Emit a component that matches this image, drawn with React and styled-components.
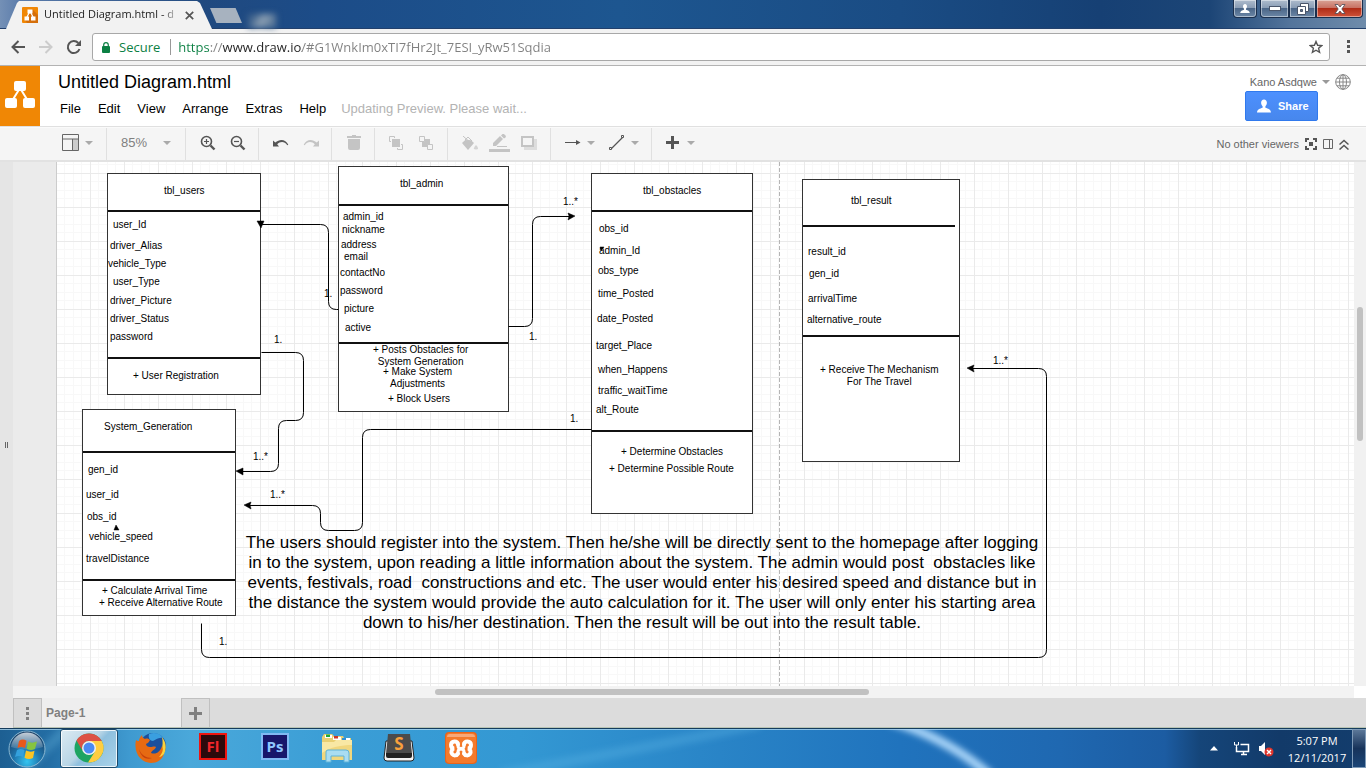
import React from 'react';
import styled, { createGlobalStyle } from 'styled-components';

const GlobalStyle = createGlobalStyle`
  *, *::before, *::after { box-sizing: border-box; }
  body { margin: 0; font-family: "Liberation Sans", Arial, sans-serif; }
  button, input { font: inherit; color: inherit; border: 0; padding: 0; margin: 0; background: none; }
  svg { display: block; flex: none; }
`;

const Screen = styled.div`
  display: flex;
  flex-direction: column;
  height: 100vh;
  min-width: 900px;
  overflow: hidden;
  background: #fff;
`;

/* ---------- browser window ---------- */

const TabStrip = styled.div`
  position: relative;
  display: flex;
  height: 29px;
  flex: none;
  padding-left: 6px;
  border-bottom: 1px solid #22406c;
  background: linear-gradient(90deg, #7490b6 0, #5b7cab 20px, #20497f 200px, #1c4c88 320px, #1d5690 620px, #1a4c84 900px, #164074 1100px, #1c4576 1210px, #53749b 1290px, #6f8cab 100%);
`;

const BrowserTab = styled.div`
  display: flex;
  align-items: center;
  width: 206px;
  height: 28px;
  margin-top: 1px;
  padding: 0 18px 0 16px;
  background: #f2f2f2;
  clip-path: polygon(0 100%, 11px 2px, 13px 0, 191px 0, 194px 2px, 100% 100%);
  font: 11px/16px "Open Sans", sans-serif;
  color: #222;
`;

const TabTitle = styled.span`
  flex: 1;
  margin: 0 0 2px 6px;
  white-space: nowrap;
  mask-image: linear-gradient(90deg, #000 118px, transparent 136px);
`;

const IconButton = styled.button`
  display: flex;
  align-items: center;
  justify-content: center;
  flex: none;
`;

const NewTab = styled.button`
  width: 32px;
  height: 15px;
  margin-top: 8px;
  margin-left: -2px;
  background: #a7b2bf;
  clip-path: polygon(0 0, 80% 0, 100% 100%, 20% 100%);
`;

const DesktopShape = styled.div`
  width: 28px;
  height: 14px;
  margin: 14px 0 0 6px;
  background: linear-gradient(120deg, #40638c 20%, #8fa2b5 50%, #5d7a9a 80%);
  filter: blur(3px);
`;

const WindowButtons = styled.div`
  display: flex;
  margin-left: auto;
  margin-right: 3px;
  height: 18px;
`;

const WindowButton = styled.button`
  display: flex;
  align-items: center;
  justify-content: center;
  width: ${(p) => p.$w}px;
  height: 18px;
  margin-left: ${(p) => (p.$apart ? 3 : 0)}px;
  border: 1px solid #1b2f4d;
  border-top: 0;
  border-radius: ${(p) => p.$radius || '0'};
  box-shadow: inset 0 0 0 1px rgba(255, 255, 255, 0.45);
  background: ${(p) =>
    p.$close
      ? 'linear-gradient(#d9a396 0, #c87264 45%, #b02c17 50%, #d0533a 100%)'
      : 'linear-gradient(#aebccd 0, #8a9db5 45%, #4b6688 50%, #6c87a6 100%)'};
`;

const NavBar = styled.div`
  display: flex;
  align-items: center;
  height: 37px;
  flex: none;
  padding: 0 5px 0 4px;
  background: #f2f2f2;
  border-bottom: 1px solid #b3b3b3;
`;

const NavButton = styled(IconButton)`
  width: 28px;
  height: 28px;
  color: ${(p) => (p.$off ? '#ccc' : '#555')};
`;

const AddressBar = styled.div`
  display: flex;
  align-items: center;
  flex: 1;
  height: 28px;
  min-width: 0;
  margin: 0 5px 0 4px;
  padding: 0 6px 0 9px;
  border: 1px solid #a8a8a8;
  border-radius: 3px;
  background: #fff;
  font: 13px "Open Sans", sans-serif;
`;

const Secure = styled.span`
  margin-left: 9px;
  padding-right: 10px;
  border-right: 1px solid #999;
  line-height: 16px;
  color: #0b8043;
`;

const UrlInput = styled.input`
  flex: 1;
  min-width: 0;
  height: 22px;
  margin-left: 7px;
  outline: none;
  color: transparent;
  background: linear-gradient(90deg, #0b8043 0 32px, #808080 32px 45px, #222 45px 124px, #808080 124px);
  background-clip: text;
`;

/* ---------- app header ---------- */

const Header = styled.header`
  display: flex;
  height: 61px;
  flex: none;
  border-bottom: 1px solid #e0e0e0;
`;

const Logo = styled.a`
  display: flex;
  align-items: center;
  justify-content: center;
  width: 40px;
  height: 60px;
  background: #f08705;
`;

const HeaderMain = styled.div`
  flex: 1;
  padding: 5px 0 0 18px;
`;

const DocTitle = styled.h1`
  margin: 0;
  font-size: 18px;
  font-weight: 400;
  line-height: 22px;
  color: #000;
`;

const MenuBar = styled.nav`
  display: flex;
  gap: 17px;
  margin-top: 7px;
  padding-left: 2px;
  font-size: 13px;
  line-height: 17px;
  button { color: #000; }
`;

const Status = styled.span`
  margin-left: -2px;
  color: #b3b3b3;
`;

const Account = styled.div`
  display: flex;
  flex-direction: column;
  align-items: flex-end;
  padding: 8px 15px 0 0;
`;

const UserRow = styled.div`
  display: flex;
  align-items: center;
  height: 16px;
  gap: 5px;
  font-size: 11px;
  color: #666;
`;

const ShareButton = styled.button`
  display: flex;
  align-items: center;
  gap: 7px;
  width: 73px;
  height: 30px;
  margin: 1px 33px 0 0;
  padding-left: 11px;
  border: 1px solid #3079ed;
  border-radius: 2px;
  background: linear-gradient(#4d90fe, #4787ed);
  color: #fff;
  font-size: 11px;
  font-weight: 700;
`;

/* ---------- toolbar ---------- */

const Toolbar = styled.div`
  display: flex;
  height: 35px;
  flex: none;
  border-top: 1px solid #fafafa;
  border-bottom: 2px solid #e2e2e2;
  background: #f5f5f5;
`;

const ToolGroup = styled.div`
  display: flex;
  align-items: center;
  width: ${(p) => p.$w}px;
  height: 32px;
  padding: 0 0 3px ${(p) => p.$pad}px;
  gap: ${(p) => p.$gap || 14}px;
  border-right: ${(p) => (p.$last ? 0 : 1)}px solid #e0e0e0;
`;

const ToolButton = styled(IconButton)`
  gap: ${(p) => p.$gap || 6}px;
  color: ${(p) => (p.$off ? '#c4c4c4' : '#555')};
`;

const ZoomValue = styled.span`
  font-size: 13px;
  color: #808080;
`;

const ToolRight = styled.div`
  display: flex;
  align-items: center;
  gap: 6px;
  margin-left: auto;
  padding-right: 17px;
  font-size: 11px;
  color: #666;
`;

/* ---------- workspace ---------- */

const Workspace = styled.main`
  display: flex;
  flex: 1;
  min-height: 0;
`;

const SplitHandle = styled.div`
  display: flex;
  align-items: center;
  justify-content: center;
  gap: 1px;
  width: 13px;
  flex: none;
  background: #e5e5e5;
  &::before, &::after {
    content: "";
    width: 1px;
    height: 6px;
    background: #666;
  }
`;

const EditorColumn = styled.div`
  display: flex;
  flex-direction: column;
  flex: 1;
  min-width: 0;
`;

const CanvasRow = styled.div`
  display: flex;
  flex: 1;
  min-height: 0;
`;

const Gutter = styled.div`
  width: 44px;
  flex: none;
  background: #ebebeb;
  border-right: 1px solid #ccc;
`;

const Canvas = styled.div`
  position: relative;
  flex: 1;
  overflow: hidden;
  background-color: #fff;
  background-image:
    linear-gradient(90deg, #eaeaea 1px, transparent 1px),
    linear-gradient(#eaeaea 1px, transparent 1px),
    linear-gradient(90deg, transparent 8px, #f8f8f8 8px 9px, transparent 9px 17px, #f8f8f8 17px 18px, transparent 18px 25px, #f8f8f8 25px 26px, transparent 26px),
    linear-gradient(transparent 8px, #f8f8f8 8px 9px, transparent 9px 17px, #f8f8f8 17px 18px, transparent 18px 25px, #f8f8f8 25px 26px, transparent 26px);
  background-size: 34px 34px;
  background-position: 33px 11px;
`;

const PageBreak = styled.div`
  position: absolute;
  top: 0;
  bottom: 0;
  left: 722px;
  width: 1px;
  background: repeating-linear-gradient(#b5b5b5 0 4px, transparent 4px 6px);
`;

const Entity = styled.section`
  position: absolute;
  left: ${(p) => p.$x}px;
  top: ${(p) => p.$y}px;
  width: ${(p) => p.$w}px;
  border: 1px solid #333;
  background: #fff;
`;

const Compartment = styled.div`
  height: ${(p) => p.$h}px;
`;

const Rule = styled.div`
  height: 2px;
  margin-right: ${(p) => p.$short || 0}px;
  background: #111;
`;

const Label = styled.span`
  position: absolute;
  left: ${(p) => p.$x}px;
  top: ${(p) => p.$y}px;
  font-size: 10px;
  line-height: 12px;
  text-align: center;
  white-space: pre;
  color: #000;
`;

const Note = styled.p`
  position: absolute;
  left: 186px;
  top: 371px;
  width: 798px;
  margin: 0;
  font-size: 17px;
  line-height: 20px;
  text-align: center;
  white-space: pre;
  color: #000;
`;

const Connectors = styled.svg`
  position: absolute;
  left: 0;
  top: 0;
  width: 1100px;
  height: 524px;
`;

const VScroll = styled.div`
  width: 12px;
  flex: none;
  padding: 145px 3px 0;
  background: #f1f1f1;
  &::before {
    content: "";
    display: block;
    height: 134px;
    border-radius: 3px;
    background: #c1c1c1;
  }
`;

const HScroll = styled.div`
  height: 12px;
  flex: none;
  margin-right: 12px;
  padding: 3px 0 0 422px;
  background: #f3f3f3;
  &::before {
    content: "";
    display: block;
    width: 434px;
    height: 6px;
    border-radius: 3px;
    background: #c1c1c1;
  }
`;

const PageTabs = styled.div`
  display: flex;
  height: 30px;
  flex: none;
  background: #dcdcdc;
  border-bottom: 1px solid #b9c4b4;
`;

const PageCell = styled.button`
  display: flex;
  align-items: center;
  justify-content: ${(p) => (p.$page ? 'flex-start' : 'center')};
  width: ${(p) => p.$w}px;
  padding-left: ${(p) => (p.$page ? 4 : 0)}px;
  border: 1px solid #c0c0c0;
  border-width: ${(p) => (p.$page ? '0' : '1px 1px 0')};
  background: ${(p) => (p.$page ? '#eee' : '#dcdcdc')};
  color: #808080;
  font-size: 12px;
  font-weight: 700;
`;

/* ---------- taskbar ---------- */

const Taskbar = styled.footer`
  position: relative;
  display: flex;
  height: 40px;
  flex: none;
  border-top: 1px solid #163c5c;
  box-shadow: inset 0 1px 0 rgba(190, 225, 245, 0.7);
  overflow: hidden;
  background: linear-gradient(90deg, #1d5f92 0, #246ea5 50px, #3f9ad0 130px, #4aa8da 190px, #3b9ed6 330px, #3398d3 520px, #2a86c8 700px, #2073bd 900px, #1f68b1 1060px, #1c5ca2 1165px, #154579 1200px, #123a69 1280px, #133d6d 100%);
`;

const Glow = styled.svg`
  position: absolute;
  left: 0;
  top: 0;
`;

const StartButton = styled(IconButton)`
  position: relative;
  width: 54px;
  margin-right: 6px;
`;

const TaskButton = styled(IconButton)`
  position: relative;
  width: 58px;
  height: 39px;
  margin-right: 4px;
  padding-bottom: 1px;
  border: ${(p) => (p.$active ? '1px solid #1c4a6b' : '1px solid transparent')};
  border-radius: 3px;
  box-shadow: ${(p) => (p.$active ? 'inset 0 0 0 1px rgba(255,255,255,.8)' : 'none')};
  background: ${(p) =>
    p.$active ? 'linear-gradient(135deg, #dcebf3 0, #b8d5e6 45%, #8fc0de 55%, #a9d3ea 100%)' : 'none'};
`;

const Tray = styled.div`
  position: relative;
  display: flex;
  align-items: center;
  margin-left: auto;
  color: #fff;
`;

const TrayToggle = styled(IconButton)`
  margin-right: 4px;
`;

const Clock = styled.time`
  width: 70px;
  margin-left: 8px;
  font: 11px/17px "Open Sans", sans-serif;
  text-align: center;
`;

const ShowDesktop = styled.button`
  width: 14px;
  height: 39px;
  border: 1px solid #7f9bb8;
  background: linear-gradient(#5b7798, #17335a 50%, #1b4577);
`;

/* ---------- icons ---------- */

const Caret = ({ color = '#aaa' }) => (
  <svg width="8" height="4" viewBox="0 0 8 4"><path d="M0 0h8L4 4z" fill={color} /></svg>
);

const DrawLogo = ({ size }) => (
  <svg width={size} height={size} viewBox="0 0 30 30">
    <path d="M15 7 7 20M15 7l8 13" stroke="#fff" strokeWidth="2" />
    <g fill="#fff">
      <rect x="9" y="0" width="12" height="10" rx="2" />
      <rect x="0" y="17" width="12" height="10" rx="2" />
      <rect x="18" y="17" width="12" height="10" rx="2" />
    </g>
  </svg>
);

const Favicon = () => (
  <svg width="16" height="16" viewBox="0 0 16 16">
    <rect width="16" height="16" rx="1" fill="#f08705" />
    <path d="M10 2 16 8v8H5l-2-3z" fill="#d56f0b" />
    <path d="M8 4 4.500 11M8 4l3.500 7" stroke="#fff" strokeWidth="1.200" />
    <path d="M5.500 2.500h5v4h-5zM2.500 9.500h4.500v4H2.500zM9 9.500h4.500v4H9z" fill="#fff" />
  </svg>
);

const Magnifier = ({ plus }) => (
  <svg width="16" height="16" viewBox="0 0 16 16" fill="none" stroke="currentColor">
    <circle cx="6.500" cy="6.500" r="5" strokeWidth="1.600" />
    <path d="m10.500 10.500 4 4" strokeWidth="2.400" />
    <path d={plus ? 'M4 6.500h5M6.500 4v5' : 'M4 6.500h5'} strokeWidth="1.200" />
  </svg>
);

const UndoIcon = ({ flip }) => (
  <svg width="16" height="12" viewBox="0 0 16 12">
    <path transform={flip ? 'translate(16 0) scale(-1 1)' : undefined} fill="currentColor"
      d="M0 3.500v6h6L4.200 7.300C7 4.300 11.500 4 14.300 8.200l1-.4C12.800 2.300 6.800 1.600 2.300 5.600z" />
  </svg>
);

const FrontIcon = ({ back }) => (
  <svg width="16" height="16" viewBox="0 0 16 16" fill="none" stroke="currentColor">
    <rect x="4" y="4" width="8" height="8" fill="currentColor" stroke="none" />
    {back ? (
      <path d="M1.500 1.500h5v5h-5zM9.500 9.500h5v5h-5z" fill="#f5f5f5" />
    ) : (
      <path d="M1.500 6.500v-5h5M14.500 9.500v5h-5M1.500 6.500H3M9.500 14.500V13M6.500 1.500V3M14.500 9.500H13" />
    )}
  </svg>
);

const PersonIcon = ({ w, h, color }) => (
  <svg width={w} height={h} viewBox="0 0 15 14" fill={color}>
    <path d="M7.500 0C5.600 0 4.400 1.500 4.400 3.600c0 1.600.7 2.900 1.600 3.700v1.500C3.200 9.600.3 10.600 0 14h15c-.3-3.400-3.200-4.400-6-5.200V7.300c.9-.8 1.600-2.100 1.600-3.700C10.600 1.500 9.400 0 7.500 0z" />
  </svg>
);

const WindowsOrb = () => (
  <svg width="38" height="38" viewBox="0 0 38 38">
    <defs>
      <radialGradient id="orb" cx="50%" cy="85%" r="80%">
        <stop offset="0" stopColor="#35c5f0" />
        <stop offset=".45" stopColor="#1f78b0" />
        <stop offset="1" stopColor="#1a3f66" />
      </radialGradient>
      <linearGradient id="orbShine" x2="0" y2="1">
        <stop offset="0" stopColor="#fff" stopOpacity=".75" />
        <stop offset="1" stopColor="#fff" stopOpacity=".1" />
      </linearGradient>
    </defs>
    <circle cx="19" cy="19" r="18" fill="url(#orb)" stroke="#8ab8d2" />
    <path d="M3 17C4 8 11 2.500 19 2.500S34 8 35 17c-9 3-23 3-32 0z" fill="url(#orbShine)" />
    <path d="M11 11c2.500-2 5-1.800 7.500-.3L17 18c-2.500-1.400-5-1.500-7.500 0z" fill="#e8591c" />
    <path d="M20 11.500c2.500 1.500 5.500 1.500 9 0L27 19c-3 1.500-6 1.200-8.500-.3z" fill="#86c440" />
    <path d="M9 20c2.500-1.500 5-1.400 7.500 0L15 27c-2.500-1.500-5-1.500-8 0z" fill="#34a1dd" />
    <path d="M18 20.500c2.500 1.400 5.500 1.600 8.500.3L25 28c-3 1.500-6 1.200-8.500-.3z" fill="#fbc424" />
  </svg>
);

const ChromeIcon = () => (
  <svg width="30" height="30" viewBox="0 0 30 30">
    <circle cx="15" cy="15" r="14.500" fill="#1da462" />
    <path d="M15 8h12.700A14.500 14.500 0 0 1 14 29.500L21 18.500z" fill="#ffcd40" />
    <path d="M2.500 7.600A14.500 14.500 0 0 1 27.700 8H15a7 7 0 0 0-6.300 10z" fill="#dd5144" />
    <circle cx="15" cy="15" r="7" fill="#f1f1f1" />
    <circle cx="15" cy="15" r="5.500" fill="#4a8af4" />
  </svg>
);

const FirefoxIcon = () => (
  <svg width="32" height="32" viewBox="0 0 32 32">
    <circle cx="18" cy="14" r="13" fill="#1b4f9c" />
    <path d="M14 2c5-2 11-1 14 4-5-1-7 2-10 3-3 0-5-3-4-7z" fill="#3a9fe0" />
    <path d="M27 5c4 5 5 11 2 17-3 5-7 8-12 8l4-6c5-3 8-9 6-19z" fill="#fbd23c" />
    <path d="M1 8c1 1 2 1 3 1 0-2 1-4 3-6 0 2 1 3 3 4 2-1 4 0 5 1-1 2-2 3-4 4 0 2 2 3 4 3 3 0 4-1 6 0-1 3-4 3-5 6 5 2 9-1 11-7 2 4 0 8-3 11 2 0 3-1 5-3-2 6-7 9-13 9C7 31-2 22 1 8z" fill="#e66a12" />
    <path d="M4 17c2 6 7 9 13 9-5 2-11 0-13-9z" fill="#c9400c" />
  </svg>
);

const AdobeIcon = ({ text, edge, fill, color }) => (
  <svg width="28" height="31" viewBox="0 0 28 31">
    <rect width="28" height="27" fill={edge} />
    <rect x="2" y="2" width="24" height="23" fill={fill} />
    <text x="14" y="19" textAnchor="middle" fontFamily="Open Sans, sans-serif" fontWeight="700" fontSize="15" fill={color}>{text}</text>
  </svg>
);

const FolderIcon = () => (
  <svg width="32" height="30" viewBox="0 0 32 30">
    <path d="M1 4 3 1h8l2 2h9l1 2h7v22H1z" fill="#e9cf72" />
    <path d="M4 2h7v3H4zM12 4h8v3h-8zM21 5h8v3h-8z" fill="#fff" />
    <path d="M5 1.500h4V4H5z" fill="#1ea83a" /><path d="M13 3h4v2.500h-4z" fill="#c9382a" /><path d="M21 5h4v2.500h-4z" fill="#2e8fd8" />
    <path d="M1 9h12l2-2h16v20H1z" fill="#f8e8a4" />
    <path d="M1 20c8-6 20-8 30-8v15H1z" fill="#f0d77e" />
    <path d="M5 19q0-2 2-2h18q3 0 3 3v9h-5v-6H10v6H5z" fill="#a9ddf2" stroke="#5eb3d8" />
  </svg>
);

const SublimeIcon = () => (
  <svg width="32" height="30" viewBox="0 0 32 30">
    <path d="M3 8h26l2 17q0 3-3 3H4q-3 0-3-3z" fill="#f2f2f2" stroke="#222" />
    <path d="M5 1h22l2 20q0 2-2 2H5q-2 0-2-2z" fill="#4b4b4b" />
    <path d="M3 20h26v3q0 2-2 2H5q-2 0-2-2z" fill="#222" />
    <text x="16" y="17" textAnchor="middle" fontFamily="Open Sans, sans-serif" fontWeight="700" fontSize="17" fill="#f9a03c">S</text>
  </svg>
);

const XamppIcon = () => (
  <svg width="32" height="32" viewBox="0 0 32 32">
    <rect width="32" height="32" rx="4" fill="#e8641b" />
    <rect x="1" y="1" width="30" height="30" rx="4" fill="#f47a2c" />
    <path d="M2 5q0-3 3-3h22q3 0 3 3z" fill="#f8a878" />
    <g fill="none" stroke="#fff" strokeWidth="4" strokeLinecap="round">
      <path d="M13 12.500a3.500 3.500 0 1 0-4 4 3.500 3.500 0 1 0 4 5" />
      <path d="M19 12.500a3.500 3.500 0 1 1 4 4 3.500 3.500 0 1 1-4 5" />
      <path d="M13 11v3q0 2.500 3 2.500t3-2.500v-3M13 22v-2q0-3 3-3t3 3v2" strokeWidth="3" />
    </g>
  </svg>
);

/* ---------- diagram data ---------- */

const entities = [
  { name: 'users', x: 50, y: 11, w: 154, parts: [36, 145, 35] },
  { name: 'admin', x: 281, y: 4, w: 171, parts: [37, 136, 67] },
  { name: 'obstacles', x: 534, y: 11, w: 162, parts: [36, 218, 81] },
  { name: 'result', x: 745, y: 17, w: 158, parts: [45, 108, 124], short: 4 },
  { name: 'system', x: 25, y: 247, w: 154, parts: [41, 126, 34] },
];

const labels = [
  [107, 23, 'tbl_users'], [56, 57, 'user_Id'], [53, 78, 'driver_Alias'], [51, 96, 'vehicle_Type'],
  [56, 114, 'user_Type'], [53, 133, 'driver_Picture'], [53, 151, 'driver_Status'], [53, 169, 'password'],
  [76, 208, '+ User Registration'],
  [343, 16, 'tbl_admin'], [286, 49, 'admin_id'], [285, 62, 'nickname'], [284, 77, 'address'], [287, 89, 'email'],
  [283, 105, 'contactNo'], [283, 123, 'password'], [287, 141, 'picture'], [288, 160, 'active'],
  [316, 182, '+ Posts Obstacles for\nSystem Generation'], [326, 204, '+ Make System\nAdjustments'], [331, 231, '+ Block Users'],
  [586, 23, 'tbl_obstacles'], [542, 61, 'obs_id'], [542, 83, 'admin_Id'], [541, 103, 'obs_type'],
  [541, 126, 'time_Posted'], [540, 151, 'date_Posted'], [539, 178, 'target_Place'], [541, 202, 'when_Happens'],
  [541, 223, 'traffic_waitTime'], [539, 242, 'alt_Route'], [564, 284, '+ Determine Obstacles'], [552, 301, '+ Determine Possible Route'],
  [794, 33, 'tbl_result'], [751, 84, 'result_id'], [752, 106, 'gen_id'], [751, 131, 'arrivalTime'],
  [750, 152, 'alternative_route'], [763, 202, '+ Receive The Mechanism\nFor The Travel'],
  [47, 259, 'System_Generation'], [31, 302, 'gen_id'], [29, 327, 'user_id'], [30, 349, 'obs_id'],
  [32, 369, 'vehicle_speed'], [29, 391, 'travelDistance'], [45, 423, '+ Calculate Arrival Time'], [42, 435, '+ Receive Alternative Route'],
];

const multiplicities = [
  [267, 126, '1.'], [217, 172, '1.'], [506, 34, '1..*'], [472, 169, '1.'], [196, 289, '1..*'],
  [213, 327, '1..*'], [513, 251, '1.'], [936, 193, '1..*'], [162, 474, '1.'],
];

const note = `The users should register into the system. Then he/she will be directly sent to the homepage after logging
in to the system, upon reading a little information about the system. The admin would post  obstacles like
events, festivals, road  constructions and etc. The user would enter his desired speed and distance but in
the distance the system would provide the auto calculation for it. The user will only enter his starting area
down to his/her destination. Then the result will be out into the result table.`;

function Diagram() {
  return (
    <Canvas>
      <PageBreak />
      {entities.map((e) => (
        <Entity key={e.name} $x={e.x} $y={e.y} $w={e.w}>
          <Compartment $h={e.parts[0]} />
          <Rule $short={e.short} />
          <Compartment $h={e.parts[1]} />
          <Rule />
          <Compartment $h={e.parts[2]} />
        </Entity>
      ))}
      <Connectors viewBox="0 0 1100 524" aria-hidden="true">
        <g fill="none" stroke="#000" transform="translate(.5 .5)">
          <path d="M281 147h-2q-8 0-8-8V70q0-8-8-8H204" />
          <path d="M204 190h34q8 0 8 8v52q0 8-8 8h-9q-8 0-8 8v35q0 8-8 8H184" />
          <path d="M534 267H313q-8 0-8 8v85q0 8-8 8H271q-8 0-8-8V351q0-8-8-8H192" />
          <path d="M451 164h16q8 0 8-8V62q0-8 8-8H512" />
          <path d="M144 461v26q0 8 8 8H981q8 0 8-8V214q0-8-8-8H915" />
        </g>
        <path d="M200 59h7l-3 7zM179 309l7-3v7zM187 343l7-3-1 3 1 4zM518 54l-7-3 1 3-1 4zM910 206l7-3-1 3 1 4zM59 363l3 5h-5zM543 85l4 0-3 4z" fill="#000" stroke="#000" strokeWidth=".5" />
      </Connectors>
      {labels.map(([x, y, text]) => (
        <Label key={x + '-' + y} $x={x} $y={y}>{text}</Label>
      ))}
      {multiplicities.map(([x, y, text]) => (
        <Label key={x + '-' + y} $x={x} $y={y}>{text}</Label>
      ))}
      <Note>{note}</Note>
    </Canvas>
  );
}

function Browser() {
  return (
    <>
      <TabStrip>
        <BrowserTab>
          <Favicon />
          <TabTitle>Untitled Diagram.html - d</TabTitle>
          <IconButton aria-label="Close tab">
            <svg width="9" height="9" viewBox="0 0 9 9" stroke="#555" strokeWidth="1.700"><path d="m.8.8 7.400 7.400M8.200.8.8 8.200" /></svg>
          </IconButton>
        </BrowserTab>
        <NewTab aria-label="New tab" />
        <DesktopShape />
        <WindowButtons>
          <WindowButton $w={24} $radius="0 0 4px 4px" aria-label="Profile"><PersonIcon w={10} h={9} color="#fff" /></WindowButton>
          <WindowButton $w={29} $apart $radius="0 0 0 4px" aria-label="Minimize">
            <svg width="12" height="5" viewBox="0 0 12 5"><rect x=".5" y=".5" width="11" height="4" fill="#fff" stroke="#4a566b" /></svg>
          </WindowButton>
          <WindowButton $w={27} aria-label="Restore">
            <svg width="12" height="12" viewBox="0 0 12 12" fill="#fff" stroke="#4a566b"><path d="M3.500.5h8v8h-8z" /><path d="M.5 3.500h8v8h-8z" /><path d="M3.500 6.500h2v2h-2z" fill="#5d7594" /></svg>
          </WindowButton>
          <WindowButton $w={47} $close $radius="0 0 4px 0" aria-label="Close">
            <svg width="12" height="10" viewBox="0 0 12 10"><path d="M1 .5h3l2 2.500L8 .5h3L7.800 5 11 9.500H8L6 7 4 9.500H1L4.200 5z" fill="#fff" stroke="#4c4a56" strokeWidth=".8" /></svg>
          </WindowButton>
        </WindowButtons>
      </TabStrip>
      <NavBar>
        <NavButton aria-label="Back">
          <svg width="14" height="14" viewBox="0 0 14 14" fill="none" stroke="currentColor" strokeWidth="2"><path d="M14 7H2M7.500 1 1.500 7l6 6" /></svg>
        </NavButton>
        <NavButton $off aria-label="Forward">
          <svg width="14" height="14" viewBox="0 0 14 14" fill="none" stroke="currentColor" strokeWidth="2"><path d="M0 7h12M6.500 1l6 6-6 6" /></svg>
        </NavButton>
        <NavButton aria-label="Reload">
          <svg width="16" height="16" viewBox="0 0 16 16"><path d="M13.500 10A6 6 0 1 1 12.300 4" fill="none" stroke="currentColor" strokeWidth="2" /><path d="M15 1v6H9z" fill="currentColor" /></svg>
        </NavButton>
        <AddressBar>
          <svg width="8" height="11" viewBox="0 0 8 11"><rect y="4" width="8" height="7" rx="1" fill="#0b8043" /><path d="M1.700 5V3a2.300 2.300 0 0 1 4.600 0v2" fill="none" stroke="#0b8043" strokeWidth="1.200" /></svg>
          <Secure>Secure</Secure>
          <UrlInput aria-label="Address" defaultValue="https://www.draw.io/#G1WnkIm0xTI7fHr2Jt_7ESI_yRw51Sqdia" />
          <IconButton aria-label="Bookmark this page">
            <svg width="14" height="14" viewBox="0 0 14 14" fill="none" stroke="#555" strokeWidth="1.400"><path d="m7 1.500 1.600 3.800 4.100.3-3.100 2.700 1 4L7 10.200l-3.600 2.100 1-4L1.300 5.600l4.100-.3z" /></svg>
          </IconButton>
        </AddressBar>
        <IconButton aria-label="Browser menu">
          <svg width="26" height="14" viewBox="0 0 26 14" fill="#555"><path d="M12 0h3v3h-3zM12 5h3v3h-3zM12 10h3v3h-3z" /></svg>
        </IconButton>
      </NavBar>
    </>
  );
}

function AppHeader() {
  return (
    <Header>
      <Logo href="#home" aria-label="draw.io"><DrawLogo size={30} /></Logo>
      <HeaderMain>
        <DocTitle>Untitled Diagram.html</DocTitle>
        <MenuBar>
          {['File', 'Edit', 'View', 'Arrange', 'Extras', 'Help'].map((m) => <button key={m}>{m}</button>)}
          <Status>Updating Preview. Please wait...</Status>
        </MenuBar>
      </HeaderMain>
      <Account>
        <UserRow>
          <span>Kano Asdqwe</span>
          <Caret color="#999" />
          <svg width="16" height="16" viewBox="0 0 16 16" fill="none" stroke="#888"><circle cx="8" cy="8" r="7.300" /><ellipse cx="8" cy="8" rx="3.500" ry="7.300" /><path d="M8 .5v15M.7 8h14.600M2 4.200h12M2 11.800h12" /></svg>
        </UserRow>
        <ShareButton><PersonIcon w={14} h={14} color="#fff" />Share</ShareButton>
      </Account>
    </Header>
  );
}

function Tools() {
  return (
    <Toolbar>
      <ToolGroup $w={107} $pad={62}>
        <ToolButton aria-label="View">
          <svg width="17" height="17" viewBox="0 0 17 17"><path d="M11 5h5v11h-5z" fill="#ccc" /><path d="M.5.5h16v16H.5zM.5 5h16M10.500 5v11.500" fill="none" stroke="#666" /></svg>
          <Caret />
        </ToolButton>
      </ToolGroup>
      <ToolGroup $w={79} $pad={14}>
        <ToolButton $gap={16} aria-label="Zoom"><ZoomValue>85%</ZoomValue><Caret /></ToolButton>
      </ToolGroup>
      <ToolGroup $w={73} $pad={14}>
        <ToolButton aria-label="Zoom in"><Magnifier plus /></ToolButton>
        <ToolButton aria-label="Zoom out"><Magnifier /></ToolButton>
      </ToolGroup>
      <ToolGroup $w={73} $pad={14}>
        <ToolButton aria-label="Undo"><UndoIcon /></ToolButton>
        <ToolButton $off aria-label="Redo"><UndoIcon flip /></ToolButton>
      </ToolGroup>
      <ToolGroup $w={43} $pad={15}>
        <ToolButton $off aria-label="Delete">
          <svg width="14" height="15" viewBox="0 0 14 15" fill="currentColor"><path d="M5 0h4v1h5v2H0V1h5zM1 4h12v9q0 2-2 2H3q-2 0-2-2z" /></svg>
        </ToolButton>
      </ToolGroup>
      <ToolGroup $w={73} $pad={13}>
        <ToolButton $off aria-label="To front"><FrontIcon /></ToolButton>
        <ToolButton $off aria-label="To back"><FrontIcon back /></ToolButton>
      </ToolGroup>
      <ToolGroup $w={103} $pad={14} $gap={11}>
        <ToolButton $off aria-label="Fill color">
          <svg width="16" height="14" viewBox="0 0 16 14"><path d="M0 7 6 1.500 12 7l-6 7z" fill="currentColor" /><path d="m1 0 5.500 5M3 4l3-3 4 4z" stroke="currentColor" fill="#f5f5f5" /><path d="M14 9q4 4 0 4.500Q10 13 14 9z" fill="#d4d4d4" /></svg>
        </ToolButton>
        <ToolButton $off aria-label="Line color">
          <svg width="21" height="18" viewBox="0 0 21 18" fill="currentColor"><path d="M4 12v-3l7-7 3 3-7 7zM12 1.500 13.500 0q1-.5 2 .5l1 1q.8 1 0 2L15 4.500zM8 12h10v1H8zM0 15h21v3H0z" /></svg>
        </ToolButton>
        <ToolButton $off aria-label="Shadow">
          <svg width="16" height="14" viewBox="0 0 16 14"><path d="M3 3h13v11H3z" fill="#ddd" /><path d="M1 1h11v9H1z" fill="#f5f5f5" stroke="currentColor" strokeWidth="2" /></svg>
        </ToolButton>
      </ToolGroup>
      <ToolGroup $w={101} $pad={14}>
        <ToolButton aria-label="Connection">
          <svg width="16" height="8" viewBox="0 0 16 8"><path d="M0 3.500h12" stroke="currentColor" /><path d="M11 1l4.500 2.500L11 6z" fill="currentColor" /></svg>
          <Caret />
        </ToolButton>
        <ToolButton aria-label="Waypoints">
          <svg width="16" height="16" viewBox="0 0 16 16" fill="none" stroke="currentColor"><path d="M2.500 13.500 13.500 2.500" strokeWidth="1.300" /><path d="M.5 12.500h2v2h-2zM12.500.5h2v2h-2z" fill="#f5f5f5" /></svg>
          <Caret />
        </ToolButton>
      </ToolGroup>
      <ToolGroup $w={80} $pad={14} $last>
        <ToolButton $gap={8} aria-label="Insert">
          <svg width="13" height="13" viewBox="0 0 13 13" fill="currentColor"><path d="M5 0h3v5h5v3H8v5H5V8H0V5h5z" /></svg>
          <Caret />
        </ToolButton>
      </ToolGroup>
      <ToolRight>
        <span>No other viewers</span>
        <IconButton aria-label="Fullscreen">
          <svg width="12" height="12" viewBox="0 0 12 12" fill="none" stroke="#555" strokeWidth="2"><path d="M1 4V1h3M8 1h3v3M11 8v3H8M4 11H1V8" /><path d="M4 4h4v4H4z" fill="#555" stroke="none" /></svg>
        </IconButton>
        <IconButton aria-label="Format panel">
          <svg width="10" height="10" viewBox="0 0 10 10" fill="none" stroke="#666"><path d="M.5.5h9v9h-9zM6.500.5v9" /></svg>
        </IconButton>
        <IconButton aria-label="Collapse">
          <svg width="10" height="11" viewBox="0 0 10 11" fill="none" stroke="#555" strokeWidth="1.500"><path d="m.5 5.500 4.500-4 4.500 4M.5 10.500l4.500-4 4.500 4" /></svg>
        </IconButton>
      </ToolRight>
    </Toolbar>
  );
}

function TaskbarRow() {
  return (
    <Taskbar>
      <Glow width="1366" height="39" viewBox="0 0 1366 39" aria-hidden="true">
        <defs><filter id="soft"><feGaussianBlur stdDeviation="3" /></filter></defs>
        <path d="M890-8Q945 8 990 46" fill="none" stroke="#a8d4f8" strokeWidth="9" filter="url(#soft)" />
        <path d="M500 45Q640 20 760-5" fill="none" stroke="#5cb4e4" strokeWidth="10" opacity=".35" filter="url(#soft)" />
        <path d="M20 50Q40 20 75-5" fill="none" stroke="#4f9cc9" strokeWidth="10" opacity=".5" filter="url(#soft)" />
      </Glow>
      <StartButton aria-label="Start"><WindowsOrb /></StartButton>
      <TaskButton $active aria-label="Google Chrome"><ChromeIcon /></TaskButton>
      <TaskButton aria-label="Firefox"><FirefoxIcon /></TaskButton>
      <TaskButton aria-label="Flash"><AdobeIcon text="Fl" edge="#ee1510" fill="#2d0a0c" color="#f2262b" /></TaskButton>
      <TaskButton aria-label="Photoshop"><AdobeIcon text="Ps" edge="#7fb9f3" fill="#17166b" color="#8ec6ff" /></TaskButton>
      <TaskButton aria-label="Explorer"><FolderIcon /></TaskButton>
      <TaskButton aria-label="Sublime Text"><SublimeIcon /></TaskButton>
      <TaskButton aria-label="XAMPP"><XamppIcon /></TaskButton>
      <Tray>
        <TrayToggle aria-label="Show hidden icons">
          <svg width="8" height="5" viewBox="0 0 8 5"><path d="M4 0 8 4.500H0z" fill="#fff" /></svg>
        </TrayToggle>
        <svg width="36" height="16" viewBox="0 0 36 16" fill="none" stroke="#fff"><path d="M18.500 3.500h8v7h-12V6M19 13.500h6M21.500 11v2" strokeWidth="1.500" /><path d="M12.500 1v3h4V1M14.500 4v6.500" /></svg>
        <svg width="16" height="16" viewBox="0 0 16 16"><path d="M1 5h2l4-4v13L3 10H1z" fill="#fff" /><circle cx="11" cy="11" r="4.500" fill="#e0342b" /><path d="m9 9 4 4M13 9l-4 4" stroke="#fff" strokeWidth="1.400" /></svg>
        <Clock dateTime="2017-12-11T17:07">5:07 PM<br />12/11/2017</Clock>
        <ShowDesktop aria-label="Show desktop" />
      </Tray>
    </Taskbar>
  );
}

export default function App() {
  return (
    <Screen>
      <GlobalStyle />
      <Browser />
      <AppHeader />
      <Tools />
      <Workspace>
        <SplitHandle />
        <EditorColumn>
          <CanvasRow>
            <Gutter />
            <Diagram />
            <VScroll />
          </CanvasRow>
          <HScroll />
          <PageTabs>
            <PageCell $w={29} aria-label="Pages">
              <svg width="3" height="13" viewBox="0 0 3 13" fill="#808080"><path d="M0 0h3v3H0zM0 5h3v3H0zM0 10h3v3H0z" /></svg>
            </PageCell>
            <PageCell $w={139} $page>Page-1</PageCell>
            <PageCell $w={29} aria-label="Insert page">
              <svg width="13" height="13" viewBox="0 0 13 13" fill="#808080"><path d="M5 0h3v5h5v3H8v5H5V8H0V5h5z" /></svg>
            </PageCell>
          </PageTabs>
        </EditorColumn>
      </Workspace>
      <TaskbarRow />
    </Screen>
  );
}
